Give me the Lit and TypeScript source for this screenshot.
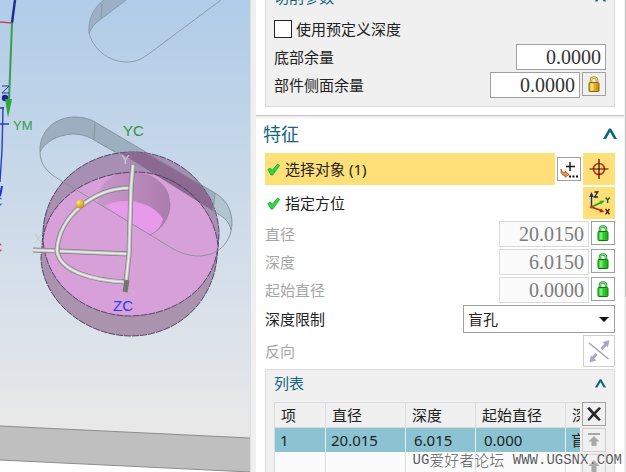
import { LitElement, html, svg, css } from "lit";
import { customElement, property } from "lit/decorators.js";

const chevron = (size: number) => html`
  <svg width=${size} height=${size} viewBox="0 0 14 14" aria-hidden="true">
    <path d="M0 12 L6 1.5 H8 L14 12 H11 L7 5 L3 12 Z" fill="#0b6680" />
  </svg>`;

const lock = (kind: "green" | "gold") => {
  const c = kind === "green"
    ? { edge: "#087a08", body: "#2fc92f", shine: "#8df58d", bar: "#2d962d" }
    : { edge: "#8a6400", body: "#e0ac1c", shine: "#fff0a0", bar: "#b08a20" };
  return html`
    <svg width="12" height="16" viewBox="0 0 12 16" aria-hidden="true">
      <path d="M3 7 V4 Q3 1.5 6 1.5 Q9 1.5 9 4 V7" fill="none" stroke=${c.bar} stroke-width="2.6" />
      <path d="M3 7 V4 Q3 1.5 6 1.5 Q9 1.5 9 4 V7" fill="none" stroke=${c.shine} stroke-width="0.9" />
      <rect x="1" y="6.5" width="10" height="9" rx="1" fill=${c.body} stroke=${c.edge} />
      <rect x="2.5" y="7.5" width="3" height="7" fill=${c.shine} opacity="0.8" />
      <rect x="8.5" y="7.5" width="2" height="7" fill=${c.edge} opacity="0.35" />
    </svg>`;
};

const tick = html`
  <svg width="13" height="13" viewBox="0 0 13 13" aria-hidden="true">
    <path d="M0.8 6.6 L3.4 5 L5 7.6 L10.6 1 L12.6 2.4 L5.8 12 L4 12 Z" fill="#30d848" stroke="#18a030" stroke-width="0.8" stroke-linejoin="round" />
  </svg>`;

const addPointIcon = html`
  <svg width="20" height="20" viewBox="0 0 20 20" aria-hidden="true">
    <path d="M11 3 V12 M7 7.5 H16" stroke="#111" stroke-width="1.4" />
    <path d="M2 10 Q2.5 13.5 6 14 L6 12.2 L10 15.5 L6 18.4 L6 16.6 Q1.5 16.5 2 10 Z" fill="#f09a48" stroke="#a8541c" stroke-width="0.8" />
    <path d="M10 17.5 h2 M13.5 17.5 h2 M17 17.5 h2" stroke="#111" stroke-width="2" />
  </svg>`;

const targetIcon = html`
  <svg width="22" height="22" viewBox="0 0 22 22" aria-hidden="true">
    <circle cx="11" cy="11" r="5.5" fill="none" stroke="#e02810" stroke-width="1.7" />
    <path d="M11 1 V21 M1.5 11 H20.5" stroke="#1c1408" stroke-width="1.2" />
  </svg>`;

const axesIcon = html`
  <svg width="26" height="28" viewBox="0 0 26 28" aria-hidden="true">
    <path d="M5.5 18 V6" stroke="#1a2a80" stroke-width="1.4" />
    <path d="M5.5 3 L3.2 8 H7.8 Z" fill="#1a2a80" />
    <path d="M5.5 18 L16 13" stroke="#1c9a1c" stroke-width="1.4" />
    <path d="M19 11.5 L13.4 11.8 L15.2 15.4 Z" fill="#2ab82a" />
    <path d="M5.5 18 L15 21.5" stroke="#b82010" stroke-width="1.4" />
    <path d="M18.4 23 L13.4 23.4 L15 19.6 Z" fill="#b82010" />
    <circle cx="5.5" cy="18" r="1.6" fill="#d83018" />
    <path d="M8.5 3 H11.8 L8.5 8 H12" fill="none" stroke="#222" stroke-width="1.3" />
    <path d="M19.6 8.5 L21.6 11 L23.6 8.5 M21.6 11 V14" fill="none" stroke="#1c601c" stroke-width="1.4" />
    <path d="M19.6 20 L23.4 25.4 M23.4 20 L19.6 25.4" stroke="#501810" stroke-width="1.4" />
  </svg>`;

const reverseIcon = html`
  <svg width="26" height="26" viewBox="0 0 26 26" aria-hidden="true">
    <path d="M3 5 L22.5 21" stroke="#a0a0a8" stroke-width="1.4" />
    <path d="M15.5 11 L20.5 5.5 M10.5 16 L6 21" stroke="#aaa8c4" stroke-width="3" />
    <path d="M23.6 2 L16.6 4 L21.8 9.4 Z M3.4 24.4 L5 17.4 L10.4 22.6 Z" fill="#aaa8c4" />
  </svg>`;

const deleteIcon = html`
  <svg width="16" height="16" viewBox="0 0 16 16" aria-hidden="true">
    <path d="M1 2.2 L3.4 1 L8 6 L13 1 L15 2.6 L9.8 8 L14.8 13.6 L13 15 L7.8 10 L3 15 L1.4 13.8 L6 8 Z" fill="#282828" />
  </svg>`;

const topIcon = html`
  <svg width="12" height="14" viewBox="0 0 12 14" aria-hidden="true">
    <path d="M0 1 H12" stroke="#a8a8a8" stroke-width="2" />
    <path d="M6 3 L11.5 8.5 H8.5 V13 H3.5 V8.5 H0.5 Z" fill="#a8a8a8" />
  </svg>`;

const upIcon = html`
  <svg width="12" height="14" viewBox="0 0 12 14" aria-hidden="true">
    <path d="M6 1 L11.5 7 H8.5 V13 H3.5 V7 H0.5 Z" fill="#a8a8a8" />
  </svg>`;

@customElement("model-view")
class ModelView extends LitElement {
  static styles = css`
    :host { display: block; overflow: hidden; background: #fff; }
    .scene { display: block; width: 100%; height: 100%; }
    .label { font-family: "Liberation Sans", Arial, sans-serif; }
    .large { font-size: 15px; }
    .small { font-size: 13px; }
    .tiny { font-size: 11px; }
  `;

  private rod(d: string) {
    return svg`
      <path d=${d} fill="none" stroke="#808080" stroke-width="5" />
      <path d=${d} fill="none" stroke="#c0c0c0" stroke-width="3.6" />
      <path d=${d} fill="none" stroke="#ececec" stroke-width="1.6" />`;
  }

  render() {
    return html`
      <svg class="scene" viewBox="0 0 250 472" preserveAspectRatio="xMinYMin slice" role="img" aria-label="模型视图">
        <defs>
          <linearGradient id="sky" x1="0" y1="0" x2="0" y2="1">
            <stop offset="0" stop-color="#b0cce8" />
            <stop offset="0.35" stop-color="#c5d7e9" />
            <stop offset="0.78" stop-color="#dde3ea" />
            <stop offset="0.95" stop-color="#e8e8e8" />
          </linearGradient>
          <linearGradient id="side" x1="0" y1="0" x2="0" y2="1">
            <stop offset="0" stop-color="#a68fb4" />
            <stop offset="1" stop-color="#ab94ad" />
          </linearGradient>
          <linearGradient id="bore" x1="0" y1="0" x2="1" y2="0">
            <stop offset="0" stop-color="#c897cb" />
            <stop offset="1" stop-color="#ac7cae" />
          </linearGradient>
          <radialGradient id="ball" cx="0.35" cy="0.3" r="0.8">
            <stop offset="0" stop-color="#ffe878" />
            <stop offset="1" stop-color="#b88408" />
          </radialGradient>
          <clipPath id="disc">
            <path d="M43 232 C45 185 85 152 133 152 C180 152 219 190 219 235 L217 258 C212 305 175 336 131 336 C85 336 42 300 41 258 Z" />
          </clipPath>
        </defs>

        <rect width="250" height="440" fill="url(#sky)" />
        <path d="M0 426 L250 438 V472 L0 460 Z" fill="#bfbfbf" />
        <path d="M0 426 L250 438 M0 460 L250 472" stroke="#8c8c8c" fill="none" />

        <path d="M104 0 C93 8 88 20 89 34 C91 28 94 24 101 19 L126 0 Z" fill="#9bb0c6" />
        <path d="M104 0 C93 8 88 20 89 32 C92 48 108 62 127 62 C136 62 142 59 150 53 L221 0 M89 34 C91 28 94 24 101 19 L126 0 M102 4 L101 19" fill="none" stroke="#8795a5" stroke-width="0.9" />

        <path d="M40 152 C39 131 55 117 75 117 C83 117 90 119 95 122 L215 193 C227 200 232 211 232 224 L231 230 C229 221 224 217 213 211 L94 140 C88 136 80 134 72 134 C57 135 45 142 40 152 Z" fill="#9cafc1" />
        <path d="M215 193 C227 200 232 211 232 224 L231 230 C229 221 224 217 213 211 Z" fill="#b0c4d2" />

        <path d="M43 232 C45 185 85 152 133 152 C180 152 219 190 219 235 L217 258 C212 305 175 336 131 336 C85 336 42 300 41 258 Z" fill="url(#side)" stroke="#4b3a58" stroke-width="0.9" stroke-dasharray="7 1" />
        <path d="M43 240 C47 200 90 172 137 172 C180 173 215 208 218 246 C214 288 175 316 129 316 C85 315 46 285 43 240 Z" fill="#d8a0d8" />
        <path d="M98 203 C96 189 106 177 121 173 L137 172 L147 174 C162 180 170 190 170 203 C170 220 160 230 150 235 Z" fill="url(#bore)" />
        <path d="M104 206 C120 197 151 199 163 219 C161 227 156 232 150 235 Z" fill="#e79ae9" />
        <path d="M119 152 L145 152 L215 193 L213 211 Z" fill="#8c6991" clip-path="url(#disc)" />
        <path d="M43 240 C47 200 90 172 137 172 C180 173 215 208 218 246 C214 288 175 316 129 316 C85 315 46 285 43 240 Z" fill="none" stroke="#4b3a58" stroke-width="0.9" stroke-dasharray="7 1" />

        <path d="M40 152 C39 131 55 117 75 117 C83 117 90 119 95 122 L215 193 C227 200 232 211 232 224 C231 243 218 256 198 256 C188 256 178 252 170 247 L60 180 C48 173 40 165 40 152 C45 142 57 135 72 134 C80 134 88 136 94 140 L115 152 M95 122 L94 139 M215 193 L213 211 C224 217 229 221 231 230" fill="none" stroke="#868e98" stroke-width="0.9" />
        <path d="M170 203 C170 220 160 230 150 235" fill="none" stroke="#9a7aa0" stroke-width="0.8" />

        <text class="label small" x="34" y="243" fill="#c6ccd4">X</text>
        <text class="label tiny" x="129" y="299" fill="#c6b6cc">Z</text>
        ${this.rod("M33 250 L129 254")}
        ${this.rod("M132 188 C94 187 58 217 57 251")}
        ${this.rod("M57 251 C60 272 95 281 127 282")}
        ${this.rod("M133 165 L131 187 L129 254 L126 282")}
        <path d="M127 280 L125 292" stroke="#747474" stroke-width="5" />
        <circle cx="80" cy="204" r="4.4" fill="url(#ball)" />
        <text class="label small" x="121" y="164" fill="#d2cadb">Y</text>
        <text class="label large" x="123" y="136" fill="#2f9440">YC</text>
        <text class="label large" x="113" y="311" fill="#2340f0">ZC</text>

        <path d="M15 0 L12 23" stroke="#1c2c94" stroke-width="2.4" />
        <path d="M0 22 L12 23" stroke="#cc4450" stroke-width="1.5" />
        <path d="M12 23 L9 100" stroke="#3c9c4c" stroke-width="2" />
        <path d="M2 86 H9 L2 93 H9" fill="none" stroke="#2434bc" />
        <circle cx="5" cy="98" r="3.2" fill="#1c2494" />
        <path d="M5 99 H12 L8 118 Z" fill="#2ea83e" />
        <path d="M3 107 L2 150 L0 182 M0 108 H4 M0 124 H9" fill="none" stroke="#2c3cc4" stroke-width="1.4" />
        <path d="M2 186 L0 196" stroke="#1c2cf0" stroke-width="2" />
        <text class="label small" x="-7" y="206" fill="#4450e0">C</text>
        <text class="label small" x="-7" y="252" fill="#e03440">C</text>
        <text class="label small" x="13" y="130" fill="#359a48">YM</text>
      </svg>`;
  }
}

@customElement("number-row")
class NumberRow extends LitElement {
  @property() label = "";
  @property() value = "";
  @property() lockKind = "";
  @property({ type: Boolean }) inactive = false;

  static styles = css`
    :host { display: block; }
    .row { display: flex; align-items: flex-start; gap: 2px; height: 26px; }
    .label { flex: 1; line-height: 26px; font-size: 15px; color: #222; }
    .inactive { color: #a6a6a6; }
    .value {
      box-sizing: border-box; width: 90px; height: 26px; margin: 0; padding: 0 4px;
      border: 1px solid #a0a0a0; border-radius: 0; background: #fff; color: #333;
      font: 20px/24px "Liberation Serif", serif; text-align: right;
    }
    .value:disabled { border-color: #dadada; background: #fbfbfb; color: #7c7c7c; }
    .lock {
      box-sizing: border-box; display: grid; place-items: center; width: 24px; height: 24px;
      margin: 0; padding: 0; border: 1px solid #a0a0a0; background: transparent;
    }
  `;

  render() {
    return html`
      <div class="row">
        <label class="label ${this.inactive ? "inactive" : ""}" for="value">${this.label}</label>
        <input class="value" id="value" .value=${this.value} ?disabled=${this.inactive} />
        ${this.lockKind
          ? html`<button class="lock" aria-label="锁定">${lock(this.lockKind as "green" | "gold")}</button>`
          : null}
      </div>`;
  }
}

@customElement("app-root")
class AppRoot extends LitElement {
  static styles = css`
    :host {
      display: grid; grid-template-columns: 250px minmax(0, 1fr); position: relative;
      height: 100vh; overflow: hidden; background: #f0f0f0; color: #222;
      font: 15px/20px "Noto Sans", "Noto Sans CJK SC", sans-serif;
    }
    svg { display: block; }
    .view { height: 100vh; }
    .dock {
      display: grid; grid-template-columns: minmax(0, 1fr) 1px; gap: 1px;
      height: 100vh; padding-left: 5px; border-left: 1px solid #dcdfe2;
      box-sizing: border-box; overflow: hidden;
    }
    .track { background: #e4e4e4; }
    .thumb { height: 63vh; background: #c4c4c4; }
    .content { margin-top: -16px; }
    .section { padding-bottom: 8px; background: #fff; }
    .first { border-bottom: 1px solid #c4c4c8; margin-bottom: 2px; }
    .body { display: flex; flex-direction: column; gap: 2px; padding: 0 9px; }
    .title {
      display: flex; align-items: center; justify-content: space-between;
      height: 31px; margin: 0 0 4px; padding: 0 7px;
      font-size: 18px; font-weight: 400; color: #14657f;
    }
    .group { border: 1px solid #dadada; background: #f0f0f0; padding: 0 8px 8px; }
    .open { border-top: 0; }
    .subtitle {
      display: flex; align-items: center; justify-content: space-between;
      height: 26px; margin: 0 0 6px; font-size: 15px; font-weight: 400; color: #14657f;
    }
    .stack { display: flex; flex-direction: column; gap: 2px; }
    .fold { margin: 0; padding: 0; border: 0; background: none; }
    .option { display: flex; align-items: center; gap: 4px; height: 26px; }
    .tickbox {
      appearance: none; box-sizing: border-box; width: 18px; height: 18px; margin: 0;
      border: 1px solid #222; background: #fff;
    }
    .row { display: flex; align-items: center; gap: 2px; min-height: 28px; }
    .tall { min-height: 32px; }
    .name { flex: 1; }
    .muted { color: #a6a6a6; }
    .step {
      flex: 1; display: flex; align-items: center; gap: 5px; height: 32px;
      padding-left: 2px;
    }
    .active { background: #ffdf78; }
    .small-button, .big-button {
      box-sizing: border-box; display: grid; place-items: center; margin: 0; padding: 0;
    }
    .small-button { width: 24px; height: 24px; border: 1px solid #a0a0a0; background: transparent; }
    .faint { border-color: #cfcfcf; }
    .big-button { width: 32px; height: 32px; border: 0; background: #ffdf78; }
    .plain { border: 1px solid #cfcfcf; background: #fff; }
    .picker { position: relative; width: 152px; height: 28px; }
    .select {
      appearance: none; box-sizing: border-box; width: 100%; height: 100%; margin: 0; padding: 0 4px;
      border: 1px solid #a0a0a0; border-radius: 0; background: #fff; color: #222; font: inherit;
    }
    .arrow { position: absolute; right: 6px; top: 12px; pointer-events: none; }
    .list { display: flex; gap: 2px; }
    .frame {
      flex: 1; min-width: 0; overflow: hidden; box-sizing: border-box;
      border: solid #dadada; border-width: 1px 0 0 1px; background: #fbfbfb;
    }
    .table { table-layout: fixed; width: 350px; border-collapse: separate; border-spacing: 0; }
    .c-item { width: 51px; }
    .c-diameter { width: 80px; }
    .c-depth { width: 70px; }
    .c-start { width: 90px; }
    .head, .cell {
      box-sizing: border-box; height: 24px; padding: 0 0 0 5px; overflow: hidden;
      text-align: left; font-weight: 400; white-space: nowrap; border-right: 1px solid #dadada;
    }
    .head { height: 25px; padding-left: 6px; background: #f0f0f0; border-bottom: 1px solid #dadada; }
    .chosen { background: #8cc3d2; border-right-color: #e8f2f4; }
    .inset { padding-left: 8px; }
    .tools { display: flex; flex-direction: column; gap: 2px; }
    .watermark {
      position: absolute; right: 4px; bottom: 2px; display: flex; align-items: center;
      font: 14px/20px "Liberation Mono", monospace; color: #5c5c5c; white-space: pre;
      text-shadow: 0 0 1px #fff, 0 0 2px #fff; pointer-events: none;
    }
    .forum { font: 15px/20px "Noto Sans CJK SC", sans-serif; font-weight: 300; }
  `;

  private columns = ["项", "直径", "深度", "起始直径", "深度限制"];
  private record = ["1", "20.015", "6.015", "0.000", "盲孔"];
  private dimensions = [
    { label: "直径", value: "20.0150" },
    { label: "深度", value: "6.0150" },
    { label: "起始直径", value: "0.0000" },
  ];

  render() {
    return html`
      <model-view class="view"></model-view>
      <div class="dock">
        <div class="content">
          <section class="section first">
            <div class="body">
              <div class="group open">
                <h3 class="subtitle">切削参数<button class="fold" aria-label="折叠切削参数">${chevron(11)}</button></h3>
                <div class="stack">
                  <div class="option">
                    <input class="tickbox" type="checkbox" id="preset" />
                    <label for="preset">使用预定义深度</label>
                  </div>
                  <number-row label="底部余量" value="0.0000"></number-row>
                  <number-row label="部件侧面余量" value="0.0000" lockKind="gold"></number-row>
                </div>
              </div>
            </div>
          </section>

          <section class="section">
            <h2 class="title">特征<button class="fold" aria-label="折叠特征">${chevron(14)}</button></h2>
            <div class="body">
              <div class="row tall">
                <div class="step active">${tick}<span>选择对象 (1)</span></div>
                <button class="small-button" aria-label="添加点">${addPointIcon}</button>
                <button class="big-button" aria-label="选择">${targetIcon}</button>
              </div>
              <div class="row tall">
                <div class="step">${tick}<span>指定方位</span></div>
                <button class="big-button" aria-label="坐标系">${axesIcon}</button>
              </div>
              ${this.dimensions.map((d) => html`
                <number-row label=${d.label} value=${d.value} lockKind="green" inactive></number-row>`)}
              <div class="row">
                <label class="name" for="limit">深度限制</label>
                <div class="picker">
                  <select class="select" id="limit"><option>盲孔</option></select>
                  <svg class="arrow" width="10" height="5" viewBox="0 0 10 5" aria-hidden="true">
                    <path d="M0 0 H10 L5 5 Z" fill="#111" />
                  </svg>
                </div>
              </div>
              <div class="row tall">
                <span class="name muted">反向</span>
                <button class="big-button plain" aria-label="反向" disabled>${reverseIcon}</button>
              </div>
              <div class="group">
                <h3 class="subtitle">列表<button class="fold" aria-label="折叠列表">${chevron(11)}</button></h3>
                <div class="list">
                  <div class="frame">
                    <table class="table">
                      <colgroup>
                        <col class="c-item" /><col class="c-diameter" /><col class="c-depth" /><col class="c-start" /><col />
                      </colgroup>
                      <thead>
                        <tr>${this.columns.map((c) => html`<th class="head" scope="col">${c}</th>`)}</tr>
                      </thead>
                      <tbody>
                        <tr>${this.record.map((v, i) => html`<td class="cell chosen ${i === 2 || i === 3 ? "inset" : ""}">${v}</td>`)}</tr>
                        <tr>${this.record.map(() => html`<td class="cell"></td>`)}</tr>
                      </tbody>
                    </table>
                  </div>
                  <div class="tools">
                    <button class="small-button" aria-label="移除">${deleteIcon}</button>
                    <button class="small-button faint" aria-label="移至顶部" disabled>${topIcon}</button>
                    <button class="small-button faint" aria-label="上移" disabled>${upIcon}</button>
                  </div>
                </div>
              </div>
            </div>
          </section>
        </div>
        <div class="track"><div class="thumb"></div></div>
      </div>
      <div class="watermark">UG<span class="forum">爱好者论坛</span> WWW.UGSNX.COM</div>`;
  }
}
